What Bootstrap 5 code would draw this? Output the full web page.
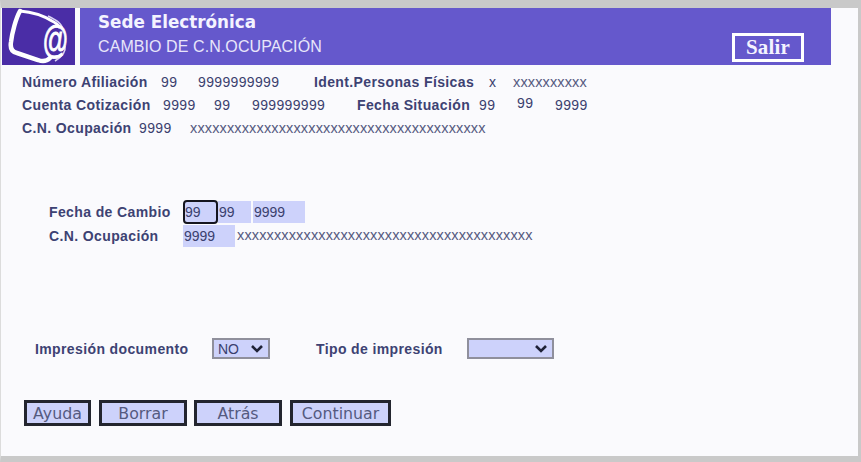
<!DOCTYPE html>
<html lang="es">
<head>
<meta charset="utf-8">
<title>Sede Electrónica</title>
<link rel="stylesheet" href="https://cdn.jsdelivr.net/npm/bootstrap@5.3.0/dist/css/bootstrap.min.css">
<style>
html,body{height:462px;overflow:hidden}
body{background:#fafafd;color:#3a3f6e;font:14px/1.2 "Liberation Sans",Arial,sans-serif}
.shell{height:462px;border-top:8px solid #c9c9c9;border-bottom:6px solid #c9c9c9;border-left:1px solid #dcdcdc;border-right:3px solid #c9c9c9}
.headbar{height:57px;margin-left:1px;width:829px}
.logobox{width:73px;background:#4a2da6}
.titlebar{width:751px;margin-left:5px;background:#6558cc;color:#fff;padding-left:18px;padding-right:27px}
.site-name{font:bold 16.8px/1 "DejaVu Sans",sans-serif;color:#f4f3ff;padding-top:6px}
.page-name{font-size:16px;line-height:1;color:#e8e6fa;margin-top:8px;letter-spacing:.08px}
.exit-btn{width:72px;height:29px;border:3px solid #fff;background:transparent;color:#f4f3ff;font:bold 21px/1 "Liberation Serif",serif;letter-spacing:.2px;padding:0;margin-top:25px}
.data-row{height:23px;white-space:nowrap}
.lbl{font-weight:700;font-size:14px;color:#3d4273;letter-spacing:.38px}
.val{color:#3a3f6e;font-size:14px;letter-spacing:.35px}
.xs{font-size:14.5px;letter-spacing:.14px;color:#555980}
.raise{position:relative;top:-2px}
.block-a{padding:6px 0 0 21px}
.block-b{padding:0 0 0 48px;margin-top:60px}
.row-gap{margin-top:1px}
.block-c{padding-left:34px;margin-top:91px}
.block-d{padding-left:23px;margin-top:41px}
.w-a{width:139px}.w-b{width:37px}.w-c{width:116px}.w-d{width:175px}.w-e{width:24px}
.w-f{width:141px}.w-g{width:51px}.w-h{width:38px}.w-i{width:105px}.w-j{width:122px}.w-l{width:38px}
.w-m{width:117px}.w-n{width:51px}
.w-o{width:134px}.w-p{width:177px;padding-top:1px}.w-q{width:151px;margin-left:46px;padding-top:1px}
.field{height:22px;background:#cdd2fb;border:0;color:#3a3f6e;font:14px "Liberation Sans",sans-serif;padding:0 0 0 1px;border-radius:0;outline:0}
.f1{width:35px;height:24px;border:2px solid #15151f;border-radius:4px;padding:0}
.f2{width:33px;margin-right:2px}
.f3{width:52px}
.f4{width:52px;margin-right:2px}
.pick{height:21px;background:#cdd2fb url("data:image/svg+xml,%3Csvg xmlns='http://www.w3.org/2000/svg' width='14' height='10'%3E%3Cpath d='M2 2l5 5 5-5' fill='none' stroke='%231f2238' stroke-width='2.6'/%3E%3C/svg%3E") no-repeat right 4px center;appearance:none;border:2px solid #8f8f9c;color:#3a3f6e;font:14px "Liberation Sans",sans-serif;padding:0 0 0 4px;border-radius:0}
.pick-a{width:58px}.pick-b{width:87px}
.act{height:26px;border:3px solid #23252f;background:#cdd2fb;color:#555a80;font:15.8px/1 "DejaVu Sans",sans-serif;padding:2px 0 0;border-radius:0}
.a1{width:67px;margin-right:8px}.a2{width:88px;margin-right:7px}.a3{width:88px;margin-right:8px}.a4{width:101px}
</style>
</head>
<body>
<div class="shell">
  <header class="headbar d-flex">
    <div class="logobox">
      <svg width="73" height="57" viewBox="0 0 73 57" aria-hidden="true">
        <path d="M18 3 C14 10 10 25 9 34 C8 40 10 44 15 45 L36 52 C41 54 45 53 48 50" fill="none" stroke="#fff" stroke-width="4.5" stroke-linecap="round"/>
        <path d="M18 3 C30 4 42 8 50 13 C54 15 56 16 57 19" fill="none" stroke="#fff" stroke-width="3" stroke-linecap="round"/>
        <path d="M46 8 C54 12 60 15 61 22 M63 38 C64 44 60 49 53 53" fill="none" stroke="#d9d4f4" stroke-width="1.6"/>
        <text transform="translate(53 45) scale(.78 1.2)" text-anchor="middle" font-family="Liberation Sans, sans-serif" font-style="italic" font-size="33" stroke="#fff" stroke-width=".7" fill="#fff">@</text>
      </svg>
    </div>
    <div class="titlebar d-flex justify-content-between flex-grow-1">
      <div>
        <div class="site-name">Sede Electrónica</div>
        <div class="page-name">CAMBIO DE C.N.OCUPACIÓN</div>
      </div>
      <button type="button" class="exit-btn">Salir</button>
    </div>
  </header>

  <section class="block-a">
    <div class="data-row d-flex align-items-center">
      <span class="lbl w-a">Número Afiliación</span><span class="val w-b">99</span><span class="val w-c">9999999999</span><span class="lbl w-d">Ident.Personas Físicas</span><span class="val w-e">x</span><span class="val xs">xxxxxxxxxx</span>
    </div>
    <div class="data-row d-flex align-items-center">
      <span class="lbl w-f">Cuenta Cotización</span><span class="val w-g">9999</span><span class="val w-h">99</span><span class="val w-i">999999999</span><span class="lbl w-j">Fecha Situación</span><span class="val w-l">99</span><span class="val w-l raise">99</span><span class="val">9999</span>
    </div>
    <div class="data-row d-flex align-items-center">
      <span class="lbl w-m">C.N. Ocupación</span><span class="val w-n">9999</span><span class="val xs">xxxxxxxxxxxxxxxxxxxxxxxxxxxxxxxxxxxxxxxx</span>
    </div>
  </section>

  <section class="block-b">
    <div class="d-flex align-items-center">
      <span class="lbl w-o">Fecha de Cambio</span><input class="field f1" value="99" aria-label="Día"><input class="field f2" value="99" aria-label="Mes"><input class="field f3" value="9999" aria-label="Año">
    </div>
    <div class="d-flex align-items-center row-gap">
      <span class="lbl w-o">C.N. Ocupación</span><input class="field f4" value="9999" aria-label="Código"><span class="val xs">xxxxxxxxxxxxxxxxxxxxxxxxxxxxxxxxxxxxxxxx</span>
    </div>
  </section>

  <section class="block-c d-flex align-items-center">
    <span class="lbl w-p">Impresión documento</span>
    <select class="pick pick-a" aria-label="Impresión documento"><option>NO</option></select>
    <span class="lbl w-q">Tipo de impresión</span>
    <select class="pick pick-b" aria-label="Tipo de impresión"><option></option></select>
  </section>

  <section class="block-d d-flex">
    <button type="button" class="act a1">Ayuda</button><button type="button" class="act a2">Borrar</button><button type="button" class="act a3">Atrás</button><button type="button" class="act a4">Continuar</button>
  </section>
</div>
<script src="https://cdn.jsdelivr.net/npm/bootstrap@5.3.0/dist/js/bootstrap.bundle.min.js"></script>
</body>
</html>
